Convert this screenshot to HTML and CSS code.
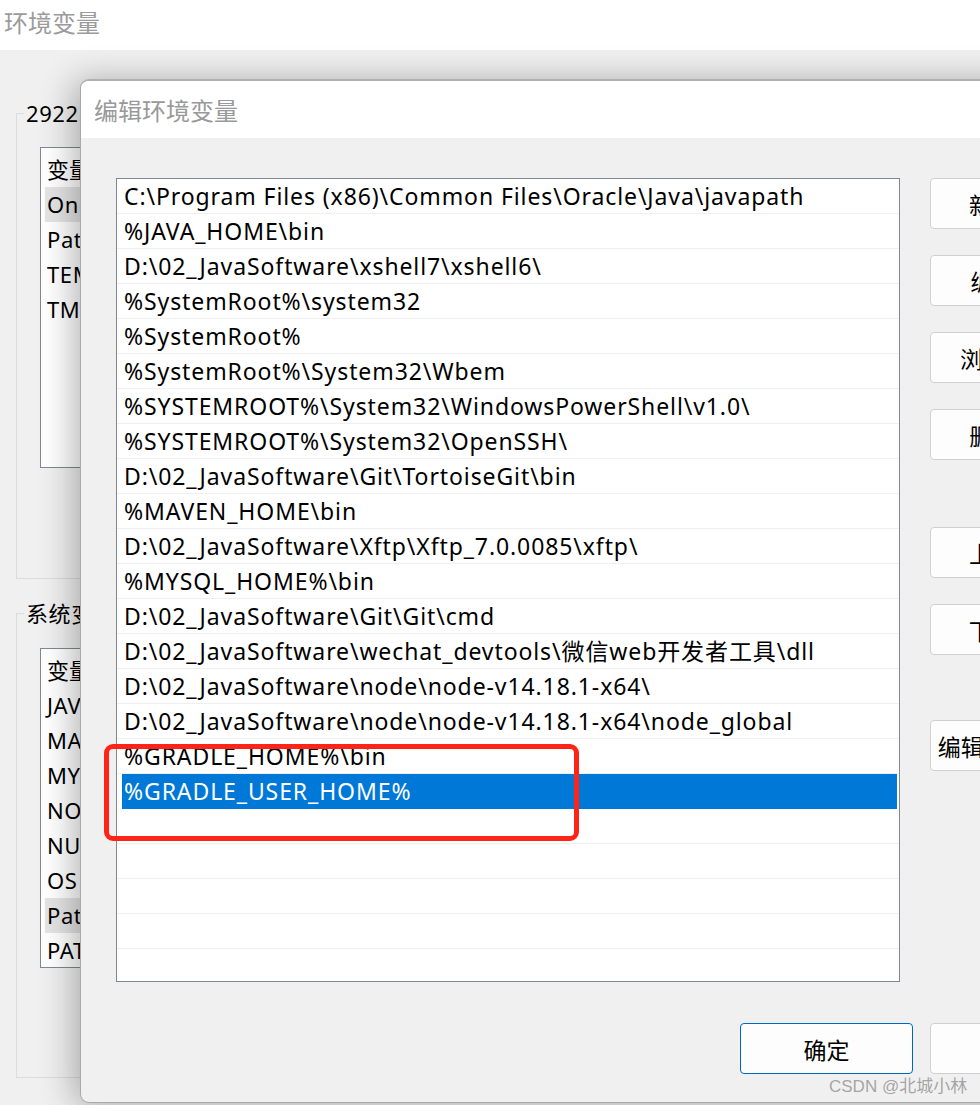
FILE: index.html
```html
<!DOCTYPE html>
<html lang="zh-CN">
<head>
<meta charset="utf-8">
<title>编辑环境变量</title>
<link rel="stylesheet" href="styles.css">
</head>
<body>
<div class="screen">
  <header class="topbar"><span class="toptitle">环境变量</span></header>

  <div class="backwin">
    <fieldset class="group g1">
      <legend>29225 的用户变量(U)</legend>
      <div class="blist bl1">
        <div class="bhead">变量</div>
        <div class="brow hl">OneDrive</div>
        <div class="brow">Path</div>
        <div class="brow">TEMP</div>
        <div class="brow">TMP</div>
      </div>
    </fieldset>
    <fieldset class="group g2">
      <legend>系统变量(S)</legend>
      <div class="blist bl2">
        <div class="bhead">变量</div>
        <div class="brow">JAVA_HOME</div>
        <div class="brow">MAVEN_HOME</div>
        <div class="brow">MYSQL_HOME</div>
        <div class="brow">NODE_PATH</div>
        <div class="brow">NUMBER_OF_PROCESSORS</div>
        <div class="brow">OS</div>
        <div class="brow hl">Path</div>
        <div class="brow">PATHEXT</div>
      </div>
    </fieldset>
  </div>

  <div class="dialog">
    <div class="dtitle">编辑环境变量</div>
    <div class="dbody">
      <div class="dmain">
        <div class="plist">
          <div class="prow">C:\Program Files (x86)\Common Files\Oracle\Java\javapath</div>
          <div class="prow">%JAVA_HOME\bin</div>
          <div class="prow">D:\02_JavaSoftware\xshell7\xshell6\</div>
          <div class="prow">%SystemRoot%\system32</div>
          <div class="prow">%SystemRoot%</div>
          <div class="prow">%SystemRoot%\System32\Wbem</div>
          <div class="prow">%SYSTEMROOT%\System32\WindowsPowerShell\v1.0\</div>
          <div class="prow">%SYSTEMROOT%\System32\OpenSSH\</div>
          <div class="prow">D:\02_JavaSoftware\Git\TortoiseGit\bin</div>
          <div class="prow">%MAVEN_HOME\bin</div>
          <div class="prow">D:\02_JavaSoftware\Xftp\Xftp_7.0.0085\xftp\</div>
          <div class="prow">%MYSQL_HOME%\bin</div>
          <div class="prow">D:\02_JavaSoftware\Git\Git\cmd</div>
          <div class="prow">D:\02_JavaSoftware\wechat_devtools\微信web开发者工具\dll</div>
          <div class="prow">D:\02_JavaSoftware\node\node-v14.18.1-x64\</div>
          <div class="prow">D:\02_JavaSoftware\node\node-v14.18.1-x64\node_global</div>
          <div class="prow">%GRADLE_HOME%\bin</div>
          <div class="prow sel">%GRADLE_USER_HOME%</div>
          <div class="prow"></div>
          <div class="prow"></div>
          <div class="prow"></div>
          <div class="prow"></div>
          <div class="prow"></div>
        </div>
        <div class="side">
          <button class="btn sbtn">新建(N)</button>
          <button class="btn sbtn">编辑(E)</button>
          <button class="btn sbtn">浏览(B)...</button>
          <button class="btn sbtn">删除(D)</button>
          <button class="btn sbtn sep1">上移(U)</button>
          <button class="btn sbtn">下移(O)</button>
          <button class="btn sbtn sep2">编辑文本(T)...</button>
        </div>
      </div>
      <div class="dfoot">
        <button class="btn fbtn primary">确定</button>
        <button class="btn fbtn">取消</button>
      </div>
    </div>
  </div>

  <div class="redbox"></div>
  <div class="watermark">CSDN @北城小林</div>
</div>
</body>
</html>
```

FILE: styles.css
```css
* { box-sizing: border-box; }

html, body {
  margin: 0;
  padding: 0;
}

body {
  font-family: "Noto Sans", "Noto Sans CJK SC", sans-serif;
  background: #f0f0f0;
  color: #000;
}

.screen {
  position: relative;
  width: 980px;
  height: 1105px;
  overflow: hidden;
  background: #f0f0f0;
}

.topbar {
  height: 50px;
  background: #ffffff;
  padding-left: 4px;
}

.toptitle {
  display: block;
  font-size: 24px;
  line-height: 44px;
  color: #9b9b9b;
  font-family: "Noto Sans CJK SC", sans-serif;
}

/* background window */
.backwin {
  display: flex;
  flex-direction: column;
}

.group {
  margin: 0 0 0 16px;
  width: 900px;
  min-width: 0;
  padding: 0 0 0 7px;
  border: 1px solid #dcdcdc;
}

.g1 { margin-top: 48px; }
.g2 { margin-top: 19px; }

.group legend {
  padding: 0 2px;
  font-size: 22px;
  line-height: 30px;
  letter-spacing: 0.6px;
  color: #000;
}

.blist {
  margin-left: 16px;
  width: 700px;
  background: #ffffff;
  border: 1px solid #828790;
  padding-top: 3px;
  overflow: hidden;
}

.bl1 { margin-top: 19px; height: 321px; margin-bottom: 110px; }
.bl2 { margin-top: 20px; height: 320px; margin-bottom: 109px; }

.bhead {
  height: 36px;
  line-height: 36px;
  font-size: 22px;
  padding-left: 6px;
}

.brow {
  height: 35px;
  line-height: 35px;
  font-size: 22px;
  letter-spacing: 0.6px;
  margin-left: 4px;
  padding-left: 2px;
}

.brow.hl { background: #e5e5e5; }

/* front dialog */
.dialog {
  position: absolute;
  left: 80px;
  top: 79px;
  width: 1000px;
  height: 1024px;
  background: #f0f0f0;
  border: 1px solid #a9a9a9;
  border-top: 2px solid #b0b0b0;
  border-radius: 9px;
  box-shadow: -6px 2px 34px rgba(0, 0, 0, 0.30);
  overflow: hidden;
}

.dtitle {
  height: 57px;
  background: #ffffff;
  padding-left: 13px;
  font-size: 24px;
  line-height: 57px;
  color: #999999;
  font-family: "Noto Sans CJK SC", sans-serif;
}

.dbody {
  padding: 40px 0 0 35px;
}

.dmain {
  display: flex;
  align-items: flex-start;
  gap: 30px;
}

.plist {
  flex: none;
  width: 784px;
  height: 804px;
  background: #ffffff;
  border: 1px solid #828790;
  overflow: hidden;
}

.prow {
  height: 35px;
  line-height: 34px;
  border-bottom: 1px solid #efefef;
  font-size: 23px;
  letter-spacing: 0.9px;
  padding-left: 7px;
  white-space: nowrap;
}

.prow.sel {
  background: #0078d7;
  color: #ffffff;
  margin: 0 2px 0 5px;
  padding-left: 2px;
  border-bottom-color: #0078d7;
}

.side {
  flex: none;
  display: flex;
  flex-direction: column;
  gap: 26px;
}

.btn {
  flex: none;
  font-family: "Noto Sans CJK SC", sans-serif;
  background: #fdfdfd;
  border: 1px solid #d0d0d0;
  border-radius: 4px;
  color: #000;
  padding: 0;
  cursor: default;
}

.sbtn {
  width: 156px;
  height: 51px;
  font-size: 23px;
  white-space: nowrap;
}

.sbtn.sep1 { margin-top: 41px; }
.sbtn.sep2 { margin-top: 39px; }

.dfoot {
  display: flex;
  gap: 17px;
  margin-top: 41px;
  margin-left: 624px;
}

.fbtn {
  width: 173px;
  height: 51px;
  font-size: 23px;
}

.fbtn.primary {
  border-color: #0067c0;
}

/* annotation */
.redbox {
  position: absolute;
  left: 104px;
  top: 744px;
  width: 475px;
  height: 97px;
  border: 5px solid #ff2418;
  border-radius: 9px;
}

.watermark {
  position: absolute;
  left: 829px;
  top: 1075px;
  font-family: "Liberation Sans", "Noto Sans CJK SC", sans-serif;
  font-size: 17px;
  line-height: 24px;
  color: rgba(130, 130, 130, 0.7);
  white-space: nowrap;
}
```
